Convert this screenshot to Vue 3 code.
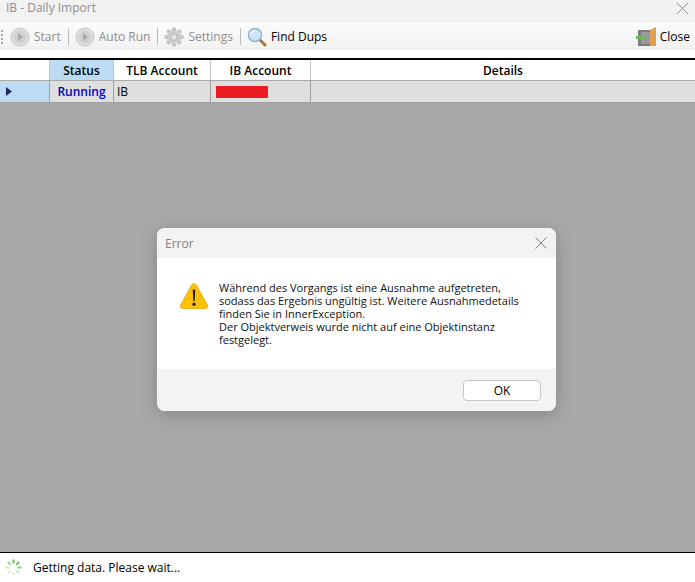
<template>
  <div class="window">
    <div class="titlebar">
      <span class="title">IB - Daily Import</span>
      <svg class="x-icon" width="13" height="13" viewBox="0 0 13 13">
        <path d="M1 1 L12 12 M12 1 L1 12" stroke="#8c8c8c" stroke-width="1" fill="none" />
      </svg>
    </div>

    <div class="toolbar">
      <span class="grip"></span>
      <div class="tool disabled">
        <svg width="20" height="20" viewBox="0 0 20 20">
          <circle cx="10" cy="10" r="9" fill="#dcdcdc" stroke="#c8c8c8" />
          <circle cx="10" cy="10" r="6" fill="#d0d0d0" />
          <path d="M8 6 L13 10 L8 14 Z" fill="#a8a8a8" />
        </svg>
        <span>Start</span>
      </div>
      <span class="sep"></span>
      <div class="tool disabled">
        <svg width="20" height="20" viewBox="0 0 20 20">
          <circle cx="10" cy="10" r="9" fill="#dcdcdc" stroke="#c8c8c8" />
          <circle cx="10" cy="10" r="6" fill="#d0d0d0" />
          <path d="M8 6 L13 10 L8 14 Z" fill="#a8a8a8" />
        </svg>
        <span>Auto Run</span>
      </div>
      <span class="sep"></span>
      <div class="tool disabled">
        <svg width="20" height="20" viewBox="0 0 20 20">
          <g fill="#c4c4c4">
            <rect v-for="a in gearTeeth" :key="a" x="8" y="0.5" width="4" height="19" rx="1" :transform="`rotate(${a} 10 10)`" />
          </g>
          <circle cx="10" cy="10" r="7" fill="#cdcdcd" />
          <circle cx="10" cy="10" r="3.2" fill="#e6e6e6" stroke="#b4b4b4" />
        </svg>
        <span>Settings</span>
      </div>
      <span class="sep"></span>
      <div class="tool">
        <svg width="20" height="20" viewBox="0 0 20 20">
          <path d="M12 12 L18 18" stroke="#a9793f" stroke-width="3" stroke-linecap="round" />
          <circle cx="8" cy="8" r="6.5" fill="#cfe3f6" stroke="#8fb4d8" stroke-width="1.5" />
          <path d="M4 7 A4 4 0 0 1 8 4" stroke="#fff" stroke-width="1.5" fill="none" />
        </svg>
        <span>Find Dups</span>
      </div>
      <div class="tool close-tool">
        <svg width="20" height="20" viewBox="0 0 20 20">
          <rect x="2" y="3" width="12" height="16" fill="#7d7d7d" />
          <rect x="5" y="5" width="9" height="12" fill="#9a9a9a" />
          <path d="M14 3 L20 0 L20 19 L14 19 Z" fill="#e0a050" />
          <path d="M0 9 H5 V6.5 L9.5 10.5 L5 14.5 V12 H0 Z" fill="#6cbb5a" />
        </svg>
        <span>Close</span>
      </div>
    </div>

    <div class="gap"></div>

    <div class="grid">
      <div class="row head">
        <div class="cell c-sel"></div>
        <div class="cell c-status active">Status</div>
        <div class="cell c-tlb">TLB Account</div>
        <div class="cell c-ib">IB Account</div>
        <div class="cell c-details">Details</div>
      </div>
      <div class="row body">
        <div class="cell c-sel selected">
          <svg width="6" height="9" viewBox="0 0 6 9"><path d="M0 0 L6 4.5 L0 9 Z" fill="#1f2a5c" /></svg>
        </div>
        <div class="cell c-status running">Running</div>
        <div class="cell c-tlb plain">IB</div>
        <div class="cell c-ib plain"><span class="redacted"></span></div>
        <div class="cell c-details"></div>
      </div>
    </div>

    <div class="empty"></div>

    <div class="statusbar">
      <svg class="spinner" width="17" height="17" viewBox="0 0 17 17">
        <path
          v-for="s in spokes"
          :key="s.a"
          d="M8.5 0.5 V4.5"
          :stroke="s.c"
          stroke-width="2"
          :transform="`rotate(${s.a} 8.5 8.5)`"
        />
      </svg>
      <span>Getting data. Please wait...</span>
    </div>

    <div class="dialog">
      <div class="dlg-title">
        <span>Error</span>
        <svg width="12" height="12" viewBox="0 0 12 12">
          <path d="M0.5 0.5 L11.5 11.5 M11.5 0.5 L0.5 11.5" stroke="#7f7f7f" stroke-width="1" fill="none" />
        </svg>
      </div>
      <div class="dlg-body">
        <svg class="warn" width="30" height="30" viewBox="0 0 30 30">
          <path d="M15 2.5 C13.8 2.5 13 3.3 12.4 4.4 L1.6 24 C0.6 26 1.6 27.5 3.6 27.5 H26.4 C28.4 27.5 29.4 26 28.4 24 L17.6 4.4 C17 3.3 16.2 2.5 15 2.5 Z" fill="#fcc200" stroke="#e5a50a" stroke-width="0.8" />
          <path d="M13.8 8.5 H16.2 L15.7 20 H14.3 Z" fill="#1c1c1c" />
          <circle cx="15" cy="23.2" r="1.6" fill="#1c1c1c" />
        </svg>
        <p class="message">Während des Vorgangs ist eine Ausnahme aufgetreten,<br />sodass das Ergebnis ungültig ist. Weitere Ausnahmedetails<br />finden Sie in InnerException.<br />Der Objektverweis wurde nicht auf eine Objektinstanz<br />festgelegt.</p>
      </div>
      <div class="dlg-footer">
        <button class="ok">OK</button>
      </div>
    </div>
  </div>
</template>

<script setup>
const gearTeeth = [0, 45, 90, 135]

const spokes = [
  { a: 0, c: '#6cc24a' },
  { a: 45, c: '#6cc24a' },
  { a: 90, c: '#8ed077' },
  { a: 135, c: '#d5d5d5' },
  { a: 180, c: '#e6e6e6' },
  { a: 225, c: '#e6e6e6' },
  { a: 270, c: '#c9e6bd' },
  { a: 315, c: '#9bd585' },
]
</script>

<style>
html,
body {
  margin: 0;
  background: #fff;
}
</style>

<style scoped>
.window {
  position: relative;
  width: 695px;
  height: 582px;
  overflow: hidden;
  display: flex;
  flex-direction: column;
  background: #fff;
  font-family: "Open Sans", "Noto Sans", sans-serif;
  font-size: 12px;
  color: #000;
}

.titlebar {
  height: 23px;
  flex: none;
  display: flex;
  align-items: center;
  justify-content: space-between;
  padding: 0 6px;
  background: #f2f2f2;
  color: #8e8e8e;
}

.title {
  font-size: 12px;
  margin-top: -8px;
}

.x-icon {
  margin-top: -7px;
}

.toolbar {
  height: 27px;
  flex: none;
  display: flex;
  align-items: center;
  background: linear-gradient(#fcfcfc, #f1f1f1);
  padding-left: 1px;
}

.grip {
  width: 2px;
  height: 14px;
  margin-right: 6px;
  background: repeating-linear-gradient(#a9a9a9 0 2px, transparent 2px 4px);
}

.tool {
  display: flex;
  align-items: center;
  gap: 4px;
  padding: 0 1px 0 1px;
}

.tool.disabled {
  color: #8d8d8d;
}

.sep {
  width: 1px;
  height: 17px;
  margin: 0 5px 0 6px;
  background: #b9b9b9;
}

.close-tool {
  margin-left: auto;
  margin-right: 4px;
}

.gap {
  height: 8px;
  flex: none;
  background: #fff;
}

.grid {
  flex: none;
  border-top: 2px solid #000;
}

.row {
  display: flex;
}

.row.head {
  height: 20px;
  border-bottom: 1px solid #a9a9a9;
  background: #fff;
  font-weight: 600;
}

.row.body {
  height: 21px;
  background: #dfdfdf;
  border-bottom: 1px solid #a0a0a0;
}

.cell {
  display: flex;
  align-items: center;
  justify-content: center;
  border-right: 1px solid #c4c4c4;
  box-sizing: border-box;
}

.row.body .cell {
  border-right-color: #a0a0a0;
}

.c-sel {
  width: 50px;
}

.c-status {
  width: 64px;
}

.c-tlb {
  width: 97px;
}

.c-ib {
  width: 100px;
}

.c-details {
  flex: 1;
  border-right: 0;
}

.active {
  background: #bcdcf4;
}

.selected {
  background: #bcdcf4;
  justify-content: flex-start;
  padding-left: 6px;
}

.running {
  color: #0000cd;
  font-weight: 600;
}

.plain {
  justify-content: flex-start;
  padding-left: 3px;
}

.redacted {
  display: block;
  width: 52px;
  height: 12px;
  margin-left: 2px;
  background: #ec1c24;
}

.empty {
  flex: 1;
  background: #a9a9a9;
}

.statusbar {
  height: 30px;
  flex: none;
  box-sizing: border-box;
  border-top: 1px solid #000;
  display: flex;
  align-items: center;
  gap: 11px;
  padding-left: 5px;
  background: #fff;
}

.dialog {
  position: absolute;
  left: 157px;
  top: 228px;
  width: 399px;
  height: 183px;
  display: flex;
  flex-direction: column;
  border-radius: 8px;
  overflow: hidden;
  background: #fff;
  box-shadow: 0 4px 18px rgba(0, 0, 0, 0.22);
}

.dlg-title {
  height: 30px;
  flex: none;
  display: flex;
  align-items: center;
  justify-content: space-between;
  padding: 0 9px 0 8px;
  background: #f3f3f3;
  color: #7f7f7f;
}

.dlg-body {
  flex: 1;
  display: flex;
  align-items: flex-start;
  padding: 23px 0 0 22px;
  background: #fff;
}

.warn {
  flex: none;
  margin-right: 10px;
}

.message {
  margin: 0;
  line-height: 13px;
  font-size: 11px;
  color: #111;
}

.dlg-footer {
  height: 42px;
  flex: none;
  display: flex;
  align-items: center;
  justify-content: flex-end;
  padding-right: 15px;
  background: #f3f3f3;
}

.ok {
  width: 78px;
  height: 21px;
  padding: 0;
  border: 1px solid #c6c6c6;
  border-radius: 4px;
  background: #fff;
  font: inherit;
  color: #000;
}
</style>
